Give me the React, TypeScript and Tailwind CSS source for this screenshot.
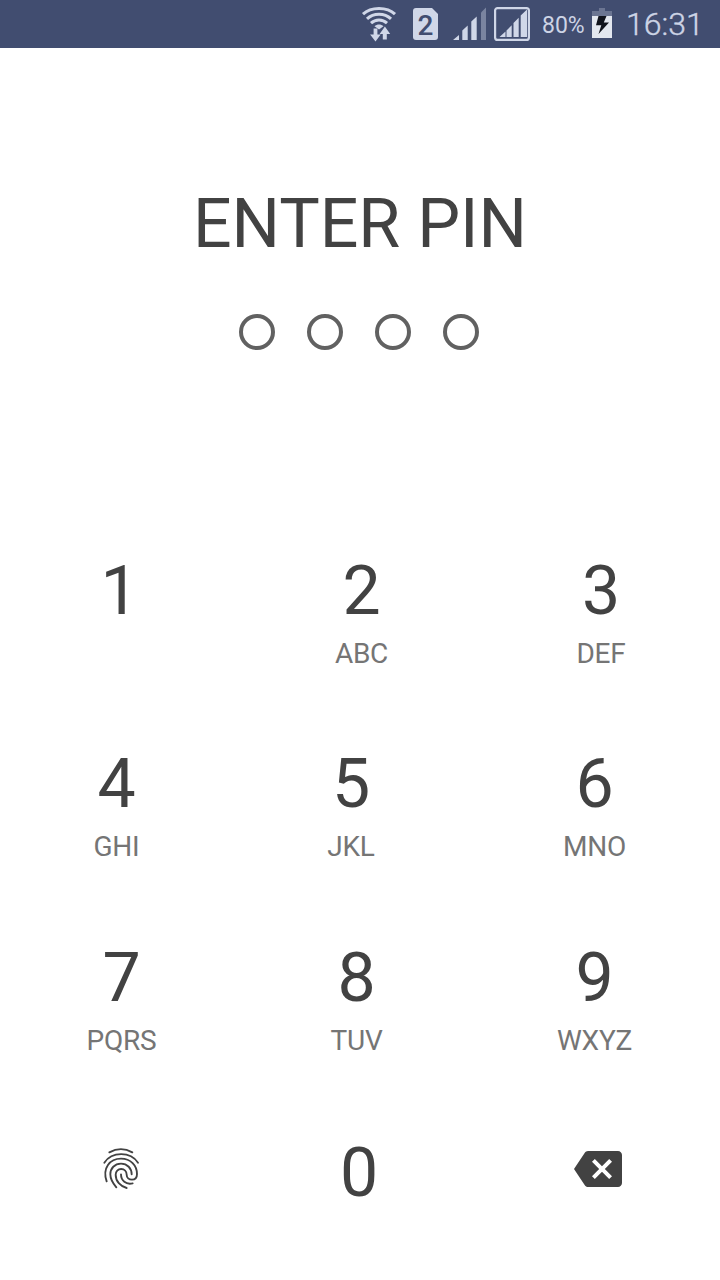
import { useState } from "react";
import { MdBackspace } from "react-icons/md";

interface Key {
  digit: string;
  letters: string;
  className: string;
}

const PIN_LENGTH = 4;

const ROWS: Key[][] = [
  [
    { digit: "1", letters: "", className: "ml-[59.5px]" },
    { digit: "2", letters: "ABC", className: "ml-[122px]" },
    { digit: "3", letters: "DEF", className: "ml-[119.5px]" },
  ],
  [
    { digit: "4", letters: "GHI", className: "ml-[56.5px]" },
    { digit: "5", letters: "JKL", className: "ml-[114.5px]" },
    { digit: "6", letters: "MNO", className: "ml-[123.5px]" },
  ],
  [
    { digit: "7", letters: "PQRS", className: "ml-[61.5px]" },
    { digit: "8", letters: "TUV", className: "ml-[115px]" },
    { digit: "9", letters: "WXYZ", className: "ml-[118px]" },
  ],
];

function StatusBar() {
  return (
    <header className="flex h-12 items-center bg-[#414d70] text-[#cdd4e5]">
      <svg className="ml-[350px] h-12 w-[190px] shrink-0" viewBox="0 0 190 48" fill="none">
        {/* wifi */}
        <g stroke="#d0d7e8" strokeWidth="3">
          <path d="M13 14.2C21 6.6 37 6.6 45 14.2" />
          <path d="M17 18.8C23.5 12.6 34.5 12.6 41 18.8" />
          <path d="M21 23.2C25.5 19 32.5 19 37 23.2" />
        </g>
        <path d="M24.5 26.2C27 23.8 31 23.8 33.5 26.2L29 29.5Z" fill="#d0d7e8" />
        <path
          d="M23.6 28.5h3.8v6h3.3l-5.2 7-5.4-7h3.5zM32.8 39.5h4v-5.5h3.4l-5.3-7.4-5.3 7.4h3.2z"
          fill="#d0d7e8"
        />
        {/* sim card */}
        <path
          d="M66 8h16l6 6v23a3 3 0 0 1-3 3H66a3 3 0 0 1-3-3V11a3 3 0 0 1 3-3z"
          fill="#d0d7e8"
        />
        <text
          x="75.5"
          y="34.5"
          textAnchor="middle"
          className="fill-[#414d70] font-[Roboto,sans-serif] text-[28px] font-medium"
        >
          2
        </text>
        {/* signal */}
        <g fill="#d0d7e8">
          <path d="M103 40l6-5v5zM112.3 30.5l5.4-5V40h-5.4zM121.3 21.5l5.4-5V40h-5.4z" />
          <path d="M131 12.5l5-5V40h-5z" opacity="0.4" />
        </g>
        <rect x="145.1" y="8.1" width="33.8" height="31.8" rx="2.5" stroke="#d0d7e8" strokeWidth="2.2" />
        <path
          d="M149.5 37l6-5.5V37zM156.5 30.5l5.2-5.2V37h-5.2zM163.5 23l5.2-5.2V37h-5.2zM170.7 15.6l6.3-6V37h-6.3z"
          fill="#d0d7e8"
        />
      </svg>
      <span className="mt-[3px] ml-0.5 w-[50px] text-[23px] leading-7">80%</span>
      <svg className="h-12 w-5 shrink-0" viewBox="0 0 20 48">
        <path d="M7 8h6v3h7v5H0v-5h7z" fill="#6b7592" />
        <path d="M0 16h20v22H0z" fill="#e3e7ef" />
        <path d="M6.5 16h8l-2.7 6.5H17L6.5 34l2.8-8.7H4z" fill="#10131c" />
      </svg>
      <time className="ml-3.5 text-[32px] leading-9 font-light [-webkit-text-stroke:0.4px_#cdd4e5]">
        16:31
      </time>
    </header>
  );
}

function FingerprintIcon() {
  return (
    <svg
      className="h-[50px] w-[46px]"
      viewBox="0 0 138 150"
      fill="none"
      stroke="currentColor"
      strokeWidth="5.6"
      strokeLinecap="round"
    >
      <path d="M34 25Q69 6 103 25" />
      <path d="M19 56C42 22 97 22 120 56" />
      <path d="M26 112C12 72 36 44 69 44C98 44 117 64 117 90C117 101 111 107 102 107C93 107 86 101 86 92C86 82 79 75 69.5 75C60 75 53 83 53 92C53 112 67 127 86 132" />
      <path d="M55 130C42 115 37 105 37 91C37 73 50 59 69 59C88 59 101 73 101 91" />
      <path d="M69 91C69 110 84 123 104 118" />
    </svg>
  );
}

function KeyButton({ digit, letters, className }: Key) {
  return (
    <button className={`flex w-[120px] flex-col items-center gap-1.5 ${className}`}>
      <span className="text-[68px] leading-[80px] text-[#424242]">{digit}</span>
      <span className="h-[33px] text-[28px] leading-[33px] tracking-[-0.25px] text-[#757575]">
        {letters}
      </span>
    </button>
  );
}

export default function App() {
  const [filled] = useState(0);

  return (
    <div className="flex h-[1280px] w-[720px] flex-col overflow-hidden bg-white font-[Roboto,sans-serif]">
      <StatusBar />

      <main className="flex flex-col">
        <h1 className="mt-[136px] text-center text-[68px] leading-[80px] text-[#424242]">
          ENTER PIN
        </h1>

        <div className="mt-[50px] mr-0.5 flex justify-center gap-8">
          {Array.from({ length: PIN_LENGTH }, (_, i) => (
            <span
              key={i}
              className={`size-9 rounded-full border-4 border-[#616161] ${i < filled ? "bg-[#616161]" : ""}`}
            />
          ))}
        </div>

        <div className="mt-[201px] flex flex-col gap-[74.4px]">
          {ROWS.map((row) => (
            <div key={row[0].digit} className="flex">
              {row.map((key) => (
                <KeyButton key={key.digit} {...key} />
              ))}
            </div>
          ))}
        </div>

        <div className="mt-[76.2px] flex h-20 items-center text-[#424242]">
          <button className="mb-2 ml-[98px]" aria-label="Use fingerprint">
            <FingerprintIcon />
          </button>
          <button className="ml-[155px] w-[120px] text-[68px] leading-[80px]">0</button>
          <button className="mb-2 ml-[155px]" aria-label="Delete">
            <MdBackspace className="size-12" />
          </button>
        </div>
      </main>
    </div>
  );
}
